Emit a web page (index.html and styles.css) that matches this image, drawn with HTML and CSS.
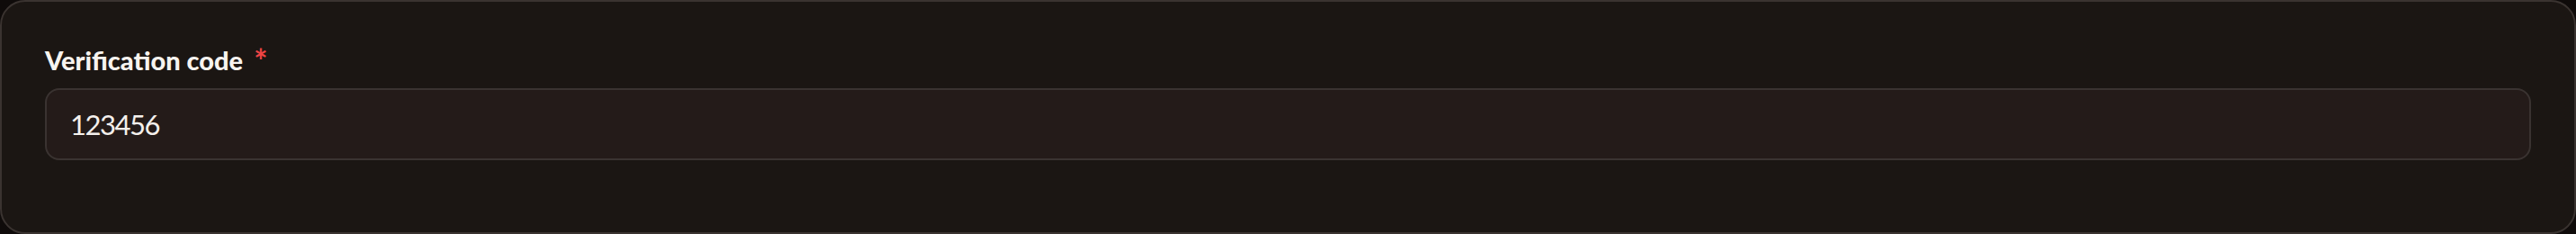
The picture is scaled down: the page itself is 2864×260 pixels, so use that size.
FILE: index.html
```html
<!DOCTYPE html>
<html lang="en">
<head>
    <meta charset="UTF-8">
    <meta name="viewport" content="width=device-width, initial-scale=1.0">
    <title>Verification code</title>
    <link rel="stylesheet" href="styles.css">
</head>
<body>
    <div class="card">
        <label class="field-label" for="code">
            Verification code <span class="required">*</span>
        </label>
        <input class="field-input" id="code" type="text" value="123456">
    </div>
</body>
</html>
```

FILE: styles.css
```css
/* Verification code field card */
body {
    margin: 0;
    background-color: #0f0b0a;
    font-family: Lato, "Noto Sans", sans-serif;
}

.card {
    box-sizing: border-box;
    height: 260px;
    padding: 46px 48px 0 48px;
    display: flex;
    flex-direction: column;
    gap: 12px;
    background-color: #1b1613;
    border: 2px solid #3a3330;
    border-radius: 28px;
}

.field-label {
    display: flex;
    align-items: flex-start;
    gap: 12px;
    font-size: 29px;
    font-weight: 900;
    line-height: 38px;
    color: #f7f3ef;
}

.required {
    color: #ef4444;
    font-size: 36px;
    font-weight: 700;
    line-height: 38px;
}

.field-input {
    box-sizing: border-box;
    width: 100%;
    height: 80px;
    padding: 0 26px;
    background-color: #241b19;
    border: 2px solid #3a3331;
    border-radius: 16px;
    font-family: Lato, "Noto Sans", sans-serif;
    font-size: 31px;
    letter-spacing: -1.5px;
    color: #f4f0ec;
    outline: none;
}
```
